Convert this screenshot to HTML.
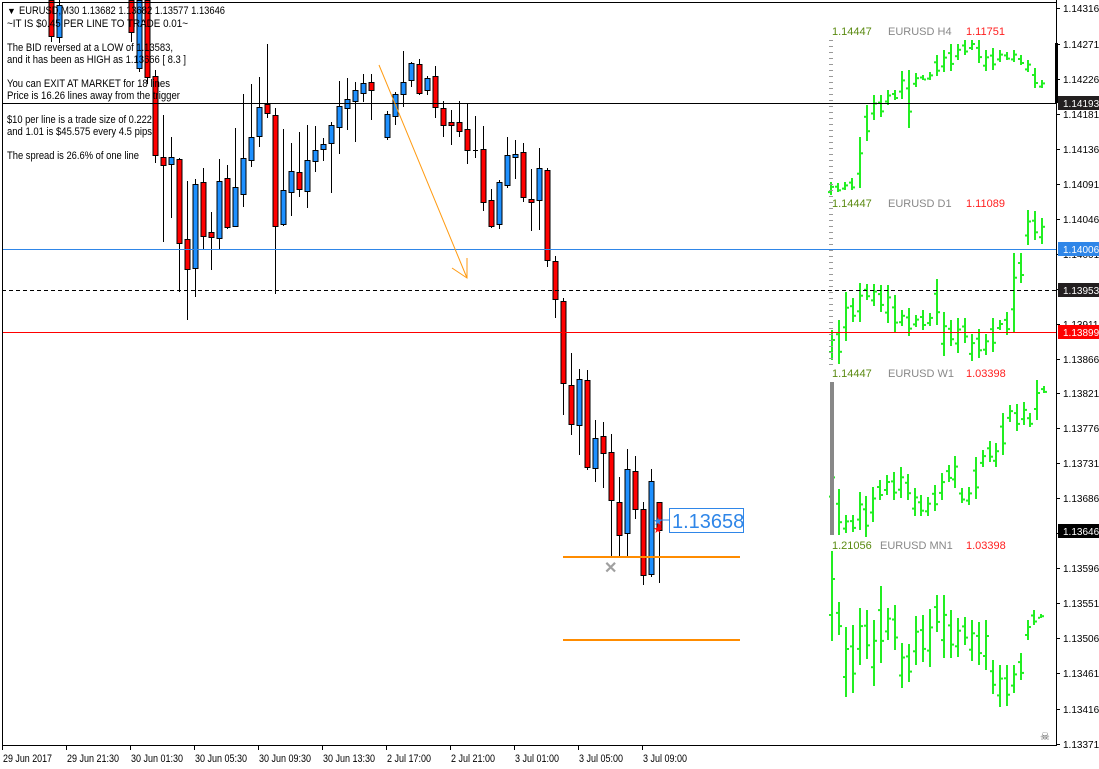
<!DOCTYPE html>
<html><head><meta charset="utf-8">
<style>
html,body{margin:0;padding:0;background:#fff;width:1099px;height:769px;overflow:hidden}
svg{position:absolute;left:0;top:0}
text{font-family:"Liberation Sans",sans-serif}
</style></head>
<body>
<svg id="s" width="1099" height="769" viewBox="0 0 1099 769" xmlns="http://www.w3.org/2000/svg">
<rect width="1099" height="769" fill="#fff"/>
<g id="mini"></g>
<g id="candles"></g>
<line x1="2" y1="103.5" x2="1056" y2="103.5" stroke="#000" stroke-width="1"/>
<line x1="2" y1="249.5" x2="1056" y2="249.5" stroke="#2f86e8" stroke-width="1"/>
<line x1="2" y1="290.5" x2="1056" y2="290.5" stroke="#000" stroke-width="1" stroke-dasharray="4,3"/>
<line x1="2" y1="332.5" x2="1056" y2="332.5" stroke="#ff0000" stroke-width="1"/>
<line x1="563" y1="557" x2="740" y2="557" stroke="#ff8c00" stroke-width="2"/>
<line x1="563" y1="640" x2="740" y2="640" stroke="#ff8c00" stroke-width="2"/>
<line x1="379" y1="65" x2="467" y2="278" stroke="#ff9a10" stroke-width="1"/>
<polyline points="452,268 467,278 467,258" fill="none" stroke="#ff9a10" stroke-width="1"/>
<text x="604" y="573" font-size="16" font-weight="bold" fill="#a0a0a0">✕</text>
<line x1="659" y1="520" x2="669" y2="520" stroke="#2f86e8"/>
<text x="653" y="525" font-size="11" fill="#2f86e8">★</text>
<text x="653" y="533" font-size="11" fill="#ff0000">★</text>
<rect x="669.5" y="508.5" width="74" height="24" fill="#fff" stroke="#2f86e8"/>
<text x="672" y="528" font-size="20" fill="#2f86e8">1.13658</text>
<line x1="2.5" y1="2" x2="2.5" y2="746" stroke="#000"/>
<line x1="2" y1="2.5" x2="1056" y2="2.5" stroke="#000"/>
<line x1="2" y1="745.5" x2="1056" y2="745.5" stroke="#000"/>
<line x1="1056.5" y1="0" x2="1056.5" y2="746" stroke="#000"/>
<rect x="1055" y="43" width="3" height="60" fill="#000"/>
<g id="ticks"></g>
<g font-size="11" fill="#000">
<text x="7" y="14" font-size="9">▼</text>
<text x="19" y="14" textLength="206" lengthAdjust="spacingAndGlyphs">EURUSD,M30  1.13682 1.13682 1.13577 1.13646</text>
<text x="7" y="27" textLength="181" lengthAdjust="spacingAndGlyphs">~IT IS $0.45 PER LINE TO TRADE 0.01~</text>
<text x="7" y="51" textLength="166" lengthAdjust="spacingAndGlyphs">The BID reversed at a LOW of 1.13583,</text>
<text x="7" y="63" textLength="179" lengthAdjust="spacingAndGlyphs">and it has been as HIGH as 1.13666 [ 8.3 ]</text>
<text x="7" y="87" textLength="163" lengthAdjust="spacingAndGlyphs">You can EXIT AT MARKET for 18 lines</text>
<text x="7" y="99" textLength="173" lengthAdjust="spacingAndGlyphs">Price is  16.26 lines away from the trigger</text>
<text x="7" y="123" textLength="145" lengthAdjust="spacingAndGlyphs">$10 per line is a trade size of 0.222</text>
<text x="7" y="135" textLength="145" lengthAdjust="spacingAndGlyphs">and 1.01 is $45.575 every 4.5 pips</text>
<text x="7" y="159" textLength="132" lengthAdjust="spacingAndGlyphs">The spread is 26.6% of one line</text>
</g>
<g font-size="11">
<text x="832" y="35" fill="#5a8a10">1.14447</text><text x="888" y="35" fill="#888">EURUSD H4</text><text x="966" y="35" fill="#ff2020">1.11751</text>
<text x="832" y="207" fill="#5a8a10">1.14447</text><text x="888" y="207" fill="#888">EURUSD D1</text><text x="966" y="207" fill="#ff2020">1.11089</text>
<text x="832" y="377" fill="#5a8a10">1.14447</text><text x="888" y="377" fill="#888">EURUSD W1</text><text x="966" y="377" fill="#ff2020">1.03398</text>
<text x="832" y="549" fill="#5a8a10">1.21056</text><text x="880" y="549" fill="#888">EURUSD MN1</text><text x="966" y="549" fill="#ff2020">1.03398</text>
</g>
<g font-size="10" fill="#000">
<text x="1063" y="12">1.14316</text>
<text x="1063" y="48">1.14271</text>
<text x="1063" y="83">1.14226</text>
<text x="1063" y="118">1.14181</text>
<text x="1063" y="153">1.14136</text>
<text x="1063" y="188">1.14091</text>
<text x="1063" y="223">1.14046</text>
<text x="1063" y="258">1.14001</text>
<text x="1063" y="328">1.13911</text>
<text x="1063" y="363">1.13866</text>
<text x="1063" y="397">1.13821</text>
<text x="1063" y="432">1.13776</text>
<text x="1063" y="467">1.13731</text>
<text x="1063" y="502">1.13686</text>
<text x="1063" y="572">1.13596</text>
<text x="1063" y="607">1.13551</text>
<text x="1063" y="642">1.13506</text>
<text x="1063" y="677">1.13461</text>
<text x="1063" y="713">1.13416</text>
<text x="1063" y="748">1.13371</text>
</g>
<g font-size="10" fill="#fff">
<rect x="1058" y="96" width="41" height="14" fill="#231f20"/><text x="1063" y="107">1.14193</text>
<rect x="1058" y="242" width="41" height="14" fill="#2f86e8"/><text x="1063" y="253">1.14006</text>
<rect x="1058" y="283" width="41" height="14" fill="#231f20"/><text x="1063" y="294">1.13953</text>
<rect x="1058" y="325" width="41" height="14" fill="#ff0000"/><text x="1063" y="336">1.13899</text>
<rect x="1058" y="524" width="41" height="14" fill="#000"/><text x="1063" y="535">1.13646</text>
</g>
<text x="1040" y="740" font-size="11" fill="#555">☠</text>
<g font-size="11" fill="#000">
<text x="3" y="762" textLength="49" lengthAdjust="spacingAndGlyphs">29 Jun 2017</text>
<text x="67" y="762" textLength="52" lengthAdjust="spacingAndGlyphs">29 Jun 21:30</text>
<text x="131" y="762" textLength="52" lengthAdjust="spacingAndGlyphs">30 Jun 01:30</text>
<text x="195" y="762" textLength="52" lengthAdjust="spacingAndGlyphs">30 Jun 05:30</text>
<text x="259" y="762" textLength="52" lengthAdjust="spacingAndGlyphs">30 Jun 09:30</text>
<text x="323" y="762" textLength="52" lengthAdjust="spacingAndGlyphs">30 Jun 13:30</text>
<text x="387" y="762" textLength="44" lengthAdjust="spacingAndGlyphs">2 Jul 17:00</text>
<text x="451" y="762" textLength="44" lengthAdjust="spacingAndGlyphs">2 Jul 21:00</text>
<text x="515" y="762" textLength="44" lengthAdjust="spacingAndGlyphs">3 Jul 01:00</text>
<text x="579" y="762" textLength="44" lengthAdjust="spacingAndGlyphs">3 Jul 05:00</text>
<text x="643" y="762" textLength="44" lengthAdjust="spacingAndGlyphs">3 Jul 09:00</text>
</g>
</svg>
<script>
var NS="http://www.w3.org/2000/svg";
function el(p,t,a){var e=document.createElementNS(NS,t);for(var k in a)e.setAttribute(k,a[k]);p.appendChild(e);return e;}
var C=[[51,0,0,36,42,0],[59,0,5,37,43,1],[131,0,0,32,42,0],[139,0,0,68,72,1],[147,0,0,77,84,0],[155,70,76,155,163,0],
[163,115,157,165,242,0],[171,137,157,164,218,1],[179,158,159,243,292,0],[187,181,239,269,320,0],[195,179,184,268,297,1],
[203,168,182,236,249,0],[211,212,232,237,270,0],[219,159,181,238,249,1],[227,165,178,227,229,0],[235,128,187,226,227,1],
[243,94,158,194,207,1],[251,84,137,160,167,1],[259,77,107,136,147,1],[267,44,104,113,118,0],[275,108,115,226,294,0],
[283,129,190,224,226,1],[291,143,171,192,216,1],[299,132,172,189,197,0],[307,125,160,191,208,1],[315,126,150,161,172,1],
[323,138,144,149,161,1],[331,122,125,143,193,1],[339,81,106,127,154,1],[347,78,99,108,130,1],[355,82,90,101,142,1],
[363,74,83,93,102,1],[371,74,82,90,120,0],[387,111,114,137,140,1],[395,92,94,116,125,1],[403,51,82,94,107,1],
[411,62,63,80,87,1],[419,59,64,93,95,0],[427,76,78,90,95,1],[435,66,76,107,118,0],[443,101,108,125,137,0],
[451,110,122,125,145,0],[459,101,122,131,137,0],[467,103,129,150,164,0],[475,116,150,151,158,0],[483,126,149,202,211,0],
[491,189,200,226,228,0],[499,180,182,224,229,1],[507,137,155,185,188,1],[515,140,154,157,179,1],[523,143,152,197,202,0],
[531,169,199,202,231,0],[539,148,168,200,230,1],[547,168,170,260,267,0],[555,256,261,299,318,0],[563,298,301,383,415,0],
[571,353,385,424,435,0],[579,369,379,425,455,1],[587,370,380,467,470,0],[595,420,438,468,482,1],[603,422,436,453,488,0],
[611,434,452,500,556,0],[619,477,502,535,556,0],[627,449,469,533,556,1],[635,456,471,509,519,0],[643,502,509,575,585,0],
[651,469,481,574,577,1],[659,502,502,530,583,0]];
var g=document.getElementById('candles');
C.forEach(function(c){
 el(g,'line',{x1:c[0]+.5,x2:c[0]+.5,y1:c[1],y2:c[4],stroke:'#000','stroke-width':1});
 var h=Math.max(c[3]-c[2],1);
 if(c[3]-c[2]<2){el(g,'line',{x1:c[0]-2,x2:c[0]+3,y1:c[2]+.5,y2:c[2]+.5,stroke:'#000'});return;}
 el(g,'rect',{x:c[0]-2,y:c[2]+.5,width:5,height:h,fill:c[5]?'#1e90ff':'#ff0000',stroke:'#000','stroke-width':1});
});
var m=document.getElementById('mini');
var sets=[
[[831,182,195],[838,183,192],[845,182,190],[852,178,190],[860,137,188],[867,105,141],[874,95,120],[881,95,117],[888,90,105],[895,90,100],[902,71,99],[909,70,128],[916,73,87],[923,75,80],[930,72,80],[937,55,76],[944,50,72],[951,44,71],[958,44,60],[965,40,55],[972,40,50],[979,40,63],[986,50,71],[993,48,70],[1000,50,62],[1007,52,60],[1014,50,62],[1021,55,65],[1028,60,72],[1035,68,88],[1042,80,88]],
[[832,330,360],[839,320,364],[846,292,341],[853,298,322],[860,283,322],[867,284,300],[874,284,306],[881,285,312],[888,285,323],[895,295,333],[902,310,326],[909,308,336],[916,315,327],[923,310,330],[930,313,326],[937,279,325],[944,312,356],[951,320,346],[958,318,353],[965,318,343],[972,334,361],[979,329,358],[986,334,355],[993,318,352],[1000,320,330],[1007,312,335],[1014,253,332],[1021,253,283],[1028,210,245],[1035,211,240],[1042,218,244]],
[[832,462,510],[839,489,535],[846,515,533],[853,515,532],[860,492,530],[866,496,537],[873,487,522],[880,480,500],[887,475,495],[894,472,500],[901,467,498],[908,474,500],[915,488,516],[921,495,516],[928,497,516],[935,485,511],[942,473,500],[949,465,482],[955,456,488],[962,488,503],[969,487,505],[976,457,499],[983,450,467],[990,441,462],[996,443,467],[1003,413,455],[1010,405,422],[1017,404,431],[1024,402,425],[1030,413,427],[1037,380,420],[1044,386,393]],
[[832,551,641],[839,602,635],[846,627,697],[853,625,693],[860,608,665],[867,610,659],[874,620,686],[881,586,663],[888,608,640],[895,605,650],[902,643,688],[909,644,682],[916,616,665],[923,615,662],[930,609,667],[937,595,632],[944,595,658],[951,610,658],[958,618,657],[965,617,645],[972,620,661],[979,622,665],[986,620,670],[993,660,694],[1000,665,707],[1007,665,706],[1014,665,693],[1021,653,680],[1028,620,640],[1034,610,625],[1041,614,618]]];
sets.forEach(function(s){
 s.forEach(function(b,i){
  var h=b[2]-b[1];if(h<4)h=4;
  el(m,'rect',{x:b[0]-1,y:b[1],width:2,height:h,fill:'#22ee22'});
  var o=(i%2)?b[1]+h*0.3:b[1]+h*0.7, cl=(i%2)?b[1]+h*0.7:b[1]+h*0.3;
  el(m,'rect',{x:b[0]-3,y:o,width:2,height:2,fill:'#22ee22'});
  el(m,'rect',{x:b[0]+1,y:cl,width:2,height:2,fill:'#22ee22'});
 });
});
el(m,'rect',{x:830,y:382,width:4,height:153,fill:'#888'});
for(var y=40;y<365;y+=6) el(m,'line',{x1:829,x2:833,y1:y+.5,y2:y+.5,stroke:'#999'});
var t=document.getElementById('ticks');
[8,44,79,114,149,184,219,254,289,324,359,393,428,463,498,533,568,603,638,673,709,744].forEach(function(y){el(t,'line',{x1:1056,x2:1060,y1:y+.5,y2:y+.5,stroke:'#000'});});
[2,66,130,194,258,322,386,450,514,578,642].forEach(function(x){el(t,'line',{x1:x+.5,x2:x+.5,y1:745,y2:750,stroke:'#000'});});
</script>
</body></html>
